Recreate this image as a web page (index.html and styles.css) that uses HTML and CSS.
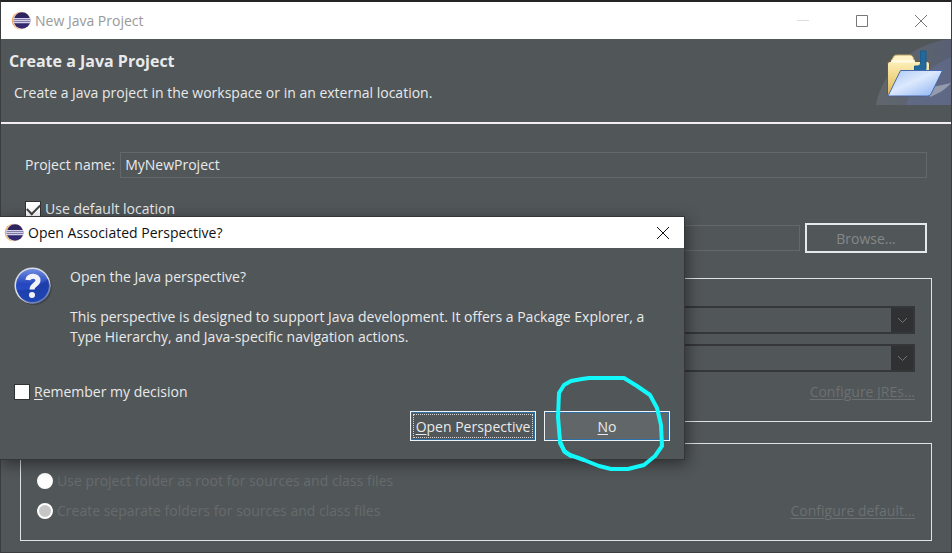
FILE: index.html
```html
<!DOCTYPE html>
<html lang="en">
<head>
<meta charset="utf-8">
<meta name="viewport" content="width=device-width, initial-scale=1">
<title>New Java Project</title>
<link rel="stylesheet" href="styles.css">
</head>
<body>
<svg class="defs" width="0" height="0" aria-hidden="true">
  <defs>
    <linearGradient id="ball" x1="0" y1="0" x2="0" y2="1">
      <stop offset="0" stop-color="#2b2358"/>
      <stop offset="1" stop-color="#352a75"/>
    </linearGradient>
    <symbol id="eclipse" viewBox="0 0 20 20">
      <circle cx="9.6" cy="9.5" r="8.8" fill="#f0a65a"/>
      <circle cx="10.8" cy="9.5" r="8.8" fill="#f8e6d6"/>
      <circle cx="11" cy="9.500" r="8.300" fill="url(#ball)"/>
      <path d="M2 7H19.500V8.300H2zM2 9H19.500V10.300H2zM2 11H19.500V12.200H2z" fill="#d3d0e6"/>
      <path d="M2.500 8.300H19.500V9H2.500zM2.500 10.300H19.500V11H2.500z" fill="#8f89b6"/>
    </symbol>
  </defs>
</svg>
<main class="window">
  <header class="titlebar">
    <svg class="app-icon"><use href="#eclipse"/></svg>
    <span class="titlebar-text">New Java Project</span>
    <div class="window-controls">
      <button type="button" class="caption minimize" aria-label="Minimize" disabled><svg viewBox="0 0 12 12"><path d="M0 5.5H12"/></svg></button>
      <button type="button" class="caption" aria-label="Maximize"><svg viewBox="0 0 12 12"><path d="M.5 .5H11.5V11.5H.5z"/></svg></button>
      <button type="button" class="caption" aria-label="Close"><svg viewBox="0 0 12 12"><path d="M0 0L12 12M12 0L0 12"/></svg></button>
    </div>
  </header>

  <section class="banner">
    <div class="banner-copy">
      <h1>Create a Java Project</h1>
      <p>Create a Java project in the workspace or in an external location.</p>
    </div>
    <svg class="banner-art" viewBox="0 0 75 66" aria-hidden="true">
      <defs>
        <linearGradient id="glow" x1="0" y1="0" x2="1" y2="0">
          <stop offset="0" stop-color="#6c727a"/>
          <stop offset="1" stop-color="#5c6684"/>
        </linearGradient>
        <linearGradient id="folder" x1="0" y1="0" x2="0" y2="1">
          <stop offset="0" stop-color="#fdf0b8"/>
          <stop offset="1" stop-color="#e0b64e"/>
        </linearGradient>
        <linearGradient id="flap" x1="0" y1="0" x2="1" y2="1">
          <stop offset="0" stop-color="#a9c6f6"/>
          <stop offset=".45" stop-color="#dce9fd"/>
          <stop offset="1" stop-color="#87aef0"/>
        </linearGradient>
      </defs>
      <path d="M0 66C5 35 34 4 75 0V66z" fill="url(#glow)" opacity=".6"/>
      <path d="M30 66C35 47 51 28 75 18V66z" fill="#657093" opacity=".55"/>
      <path d="M52 48Q64 47 75 44C71 49 64 54 54 58z" fill="#b8bec8" opacity=".6"/>
      <path d="M15 22L18 17Q19 16 21 16H34Q36 16 37 18L39 23V29H15z" fill="#fff3c3" stroke="#bfa66a"/>
      <path d="M11.500 56V25Q11.500 22.500 14 22.500H51Q53.500 22.500 53.500 25V50L47 57H13Q11.500 57 11.500 56z" fill="url(#folder)" stroke="#765333"/>
      <path d="M15 22.500H39" stroke="#fffbea" stroke-width="2"/>
      <path d="M44.500 12H50V29Q50 34 44 34H38.500V27H42Q44.500 27 44.500 24z" fill="#23699c" stroke="#1b5c8d"/>
      <path d="M24.500 31.500H66.500L55 55Q54 57 51.500 57H12z" fill="url(#flap)" stroke="#4469ae" stroke-linejoin="round"/>
    </svg>
  </section>

  <form class="wizard">
    <div class="field-row name-row">
      <label for="project-name">Project name:</label>
      <input class="text-field" id="project-name" type="text" value="MyNewProject">
    </div>
    <label class="check default-check"><input type="checkbox" checked><span>Use <u>d</u>efault location</span></label>
    <div class="field-row location-row">
      <input class="text-field" type="text" aria-label="Location" disabled>
      <button type="button" class="browse" disabled>Browse...</button>
    </div>

    <fieldset class="group jre">
      <select aria-label="Execution environment" disabled><option></option></select>
      <select aria-label="Project specific JRE" disabled><option></option></select>
      <a class="config" href="#jres">Configure JREs...</a>
    </fieldset>

    <fieldset class="group layout">
      <label class="radio"><input type="radio" name="layout" disabled><span>Use project folder as root for sources and class files</span></label>
      <div class="layout-row">
        <label class="radio"><input type="radio" name="layout" checked disabled><span>Create separate folders for sources and class files</span></label>
        <a class="config" href="#default">Configure default...</a>
      </div>
    </fieldset>
  </form>

  <section class="dialog" role="dialog" aria-labelledby="dialog-title">
    <header class="dialog-bar">
      <svg class="app-icon"><use href="#eclipse"/></svg>
      <h2 id="dialog-title">Open Associated Perspective?</h2>
      <button type="button" class="caption dialog-close" aria-label="Close dialog"><svg viewBox="0 0 12 12"><path d="M0 0L12 12M12 0L0 12"/></svg></button>
    </header>
    <div class="dialog-message">
      <svg class="question" viewBox="0 0 40 40" aria-hidden="true">
        <defs>
          <linearGradient id="blue" x1="0" y1="0" x2="0" y2="1">
            <stop offset="0" stop-color="#6f8be0"/>
            <stop offset=".45" stop-color="#2547bd"/>
            <stop offset="1" stop-color="#2858d8"/>
          </linearGradient>
        </defs>
        <circle cx="20" cy="20" r="18" fill="#303439" opacity=".5"/>
        <circle cx="18.500" cy="18.500" r="18" fill="#d9dce3"/>
        <circle cx="18.500" cy="18.500" r="16.500" fill="url(#blue)"/>
        <path d="M3 23C15 24 27 18 34 12A16.500 16.500 0 0 1 5 28z" fill="#173698" opacity=".55"/>
        <path d="M13.800 13C14.500 8 24 7.500 24 13.500C24 17.500 18 17.500 18 22.500" fill="none" stroke="#f1f3f8" stroke-width="5"/>
        <circle cx="18" cy="28" r="3" fill="#f1f3f8"/>
      </svg>
      <div class="dialog-copy">
        <p>Open the Java perspective?</p>
        <p>This perspective is designed to support Java development. It offers a Package Explorer, a Type Hierarchy, and Java-specific navigation actions.</p>
      </div>
    </div>
    <label class="check remember"><input type="checkbox"><span><u>R</u>emember my decision</span></label>
    <div class="dialog-actions">
      <button type="button" class="action primary"><span><u>O</u>pen Perspective</span></button>
      <button type="button" class="action hovered"><span><u>N</u>o</span></button>
    </div>
    <svg class="pen-mark" viewBox="0 0 110 98" aria-hidden="true">
      <path d="M68 3H33L26 4L15 6L8 10L3 18L2 42L4 66L8 76L14 80L28 85L43 91L55 94H72L88 90L99 81L106 71L105 50L101 33L94 20L81 11z"/>
      <path d="M4 68L9 77L15 81"/>
    </svg>
  </section>
</main>
</body>
</html>
```
FILE: styles.css
```css
* {
  box-sizing: border-box;
}

body {
  margin: 0;
  background: #515658;
  color: #e8eaeb;
  font-family: "Open Sans", "Noto Sans", sans-serif;
  font-size: 14px;
  line-height: 20px;
}

button,
input,
select {
  font: inherit;
  color: inherit;
}

h1,
h2,
p {
  margin: 0;
}

u {
  text-underline-offset: 2px;
}

.defs {
  position: absolute;
}

.window {
  position: relative;
  min-height: 100vh;
  border: 1px solid #3b3d3f;
  border-top: 2px solid #252324;
}

.titlebar {
  display: flex;
  align-items: center;
  height: 37px;
  padding-left: 10px;
  background: #fff;
  color: #999;
}

.app-icon {
  flex: none;
  width: 20px;
  height: 20px;
}

.titlebar-text {
  margin-left: 4px;
}

.window-controls {
  display: flex;
  margin-left: auto;
  padding-right: 1px;
}

.caption {
  display: grid;
  place-items: center;
  width: 59px;
  height: 36px;
  padding: 0;
  border: 0;
  background: none;
  color: #777;
}

.caption svg {
  width: 12px;
  height: 12px;
  fill: none;
  stroke: currentColor;
}

.minimize {
  color: #ddd;
}

.banner {
  display: flex;
  justify-content: space-between;
  height: 85px;
  padding-left: 8px;
  border-bottom: 2px solid #f1edf1;
}

.banner-copy {
  padding-top: 12px;
}

h1 {
  font-size: 16px;
  line-height: 20px;
}

.banner-copy p {
  margin: 12px 0 0 5px;
}

.banner-art {
  flex: none;
  width: 75px;
  height: 66px;
}

.wizard {
  padding: 28px 19px 11px;
}

.field-row {
  display: flex;
  gap: 5px;
  padding: 0 5px;
}

.name-row {
  align-items: center;
}

.text-field {
  flex: 1;
  min-width: 0;
  height: 26px;
  padding: 0 4px 2px;
  border: 1px solid #64686a;
  border-radius: 0;
  background: transparent;
}

.check {
  display: flex;
  align-items: center;
  gap: 4px;
}

.check input {
  display: grid;
  place-items: center;
  appearance: none;
  width: 16px;
  height: 16px;
  margin: 0;
  border: 1px solid #303234;
  background: #fff;
}

.check input:checked::before {
  content: "";
  width: 11px;
  height: 6px;
  margin-bottom: 3px;
  border: solid #444;
  border-width: 0 0 2px 2px;
  rotate: -45deg;
}

.default-check {
  margin: 21px 5px 4px;
}

.location-row {
  align-items: center;
}

.browse {
  width: 122px;
  height: 30px;
  padding: 2px 0 0;
  border: 2px solid #e4e9e9;
  background: transparent;
  color: #84888a;
}

.group {
  min-width: 0;
  margin: 25px 0 0;
  border: 1px solid #dfe3e3;
}

.jre {
  display: flex;
  flex-direction: column;
  gap: 10px;
  height: 144px;
  padding: 27px 16px 0;
}

select {
  appearance: none;
  flex: none;
  width: 100%;
  height: 28px;
  border: 2px solid #343637;
  border-radius: 0;
  background:
    url("data:image/svg+xml,%3Csvg xmlns='http://www.w3.org/2000/svg' viewBox='0 0 22 24'%3E%3Cpath d='M0 0H22V24H0z' fill='%23303132'/%3E%3Cpath d='M7 10L11.500 14.500L16 10' fill='none' stroke='%23727577'/%3E%3C/svg%3E") right / 22px 24px no-repeat;
}

select:disabled {
  opacity: 1;
}

.config {
  align-self: flex-end;
  color: #6c7072;
  text-underline-offset: 2px;
}

.layout {
  display: flex;
  flex-direction: column;
  gap: 10px;
  height: 98px;
  margin-top: 21px;
  padding: 27px 16px 0;
}

.layout-row {
  display: flex;
  justify-content: space-between;
}

.radio {
  display: flex;
  align-items: center;
  gap: 4px;
  color: #676b6d;
}

.radio input {
  appearance: none;
  width: 16px;
  height: 16px;
  margin: 0;
  border: 2px solid #fff;
  border-radius: 50%;
  background: #fff;
}

.radio input:checked {
  background: #c6c6c6;
}

.dialog {
  position: absolute;
  top: 214px;
  left: -1px;
  width: calc(100% - 265px);
  padding-bottom: 18px;
  border: 1px solid #343638;
  border-left: 0;
  background: #515658;
  box-shadow: 2px 4px 14px rgb(0 0 0 / 45%);
}

.dialog-bar {
  display: flex;
  align-items: center;
  height: 31px;
  padding-left: 4px;
  background: #fff;
  color: #111;
}

h2 {
  margin-left: 4px;
  font-size: 14px;
  font-weight: 400;
}

.dialog-close {
  width: 42px;
  height: 30px;
  margin-left: auto;
  color: #111;
}

.dialog-message {
  display: flex;
  gap: 16px;
  padding: 19px 20px 0 14px;
}

.question {
  flex: none;
  width: 40px;
  height: 40px;
}

.dialog-copy {
  display: grid;
  gap: 20px;
}

.remember {
  margin: 35px 14px 0;
}

.dialog-actions {
  display: flex;
  justify-content: flex-end;
  gap: 8px;
  padding: 9px 14px 0;
}

.action {
  width: 126px;
  height: 30px;
  padding: 1px;
  border: 1px solid #eef3f7;
  outline: 1px solid #2f6fa8;
  outline-offset: -2px;
  background: transparent;
}

.action span {
  display: block;
  height: 26px;
  border: 1px solid transparent;
  line-height: 26px;
}

.primary span {
  height: 24px;
  margin: 1px;
  border: 1px dotted #d5d5d5;
  line-height: 24px;
}

.hovered {
  background: #616668;
}

.pen-mark {
  position: absolute;
  right: 18px;
  bottom: -14px;
  width: 110px;
  height: 98px;
  fill: none;
  stroke: #12f8fb;
  stroke-width: 4;
  stroke-linecap: round;
  stroke-linejoin: round;
  pointer-events: none;
}
```
